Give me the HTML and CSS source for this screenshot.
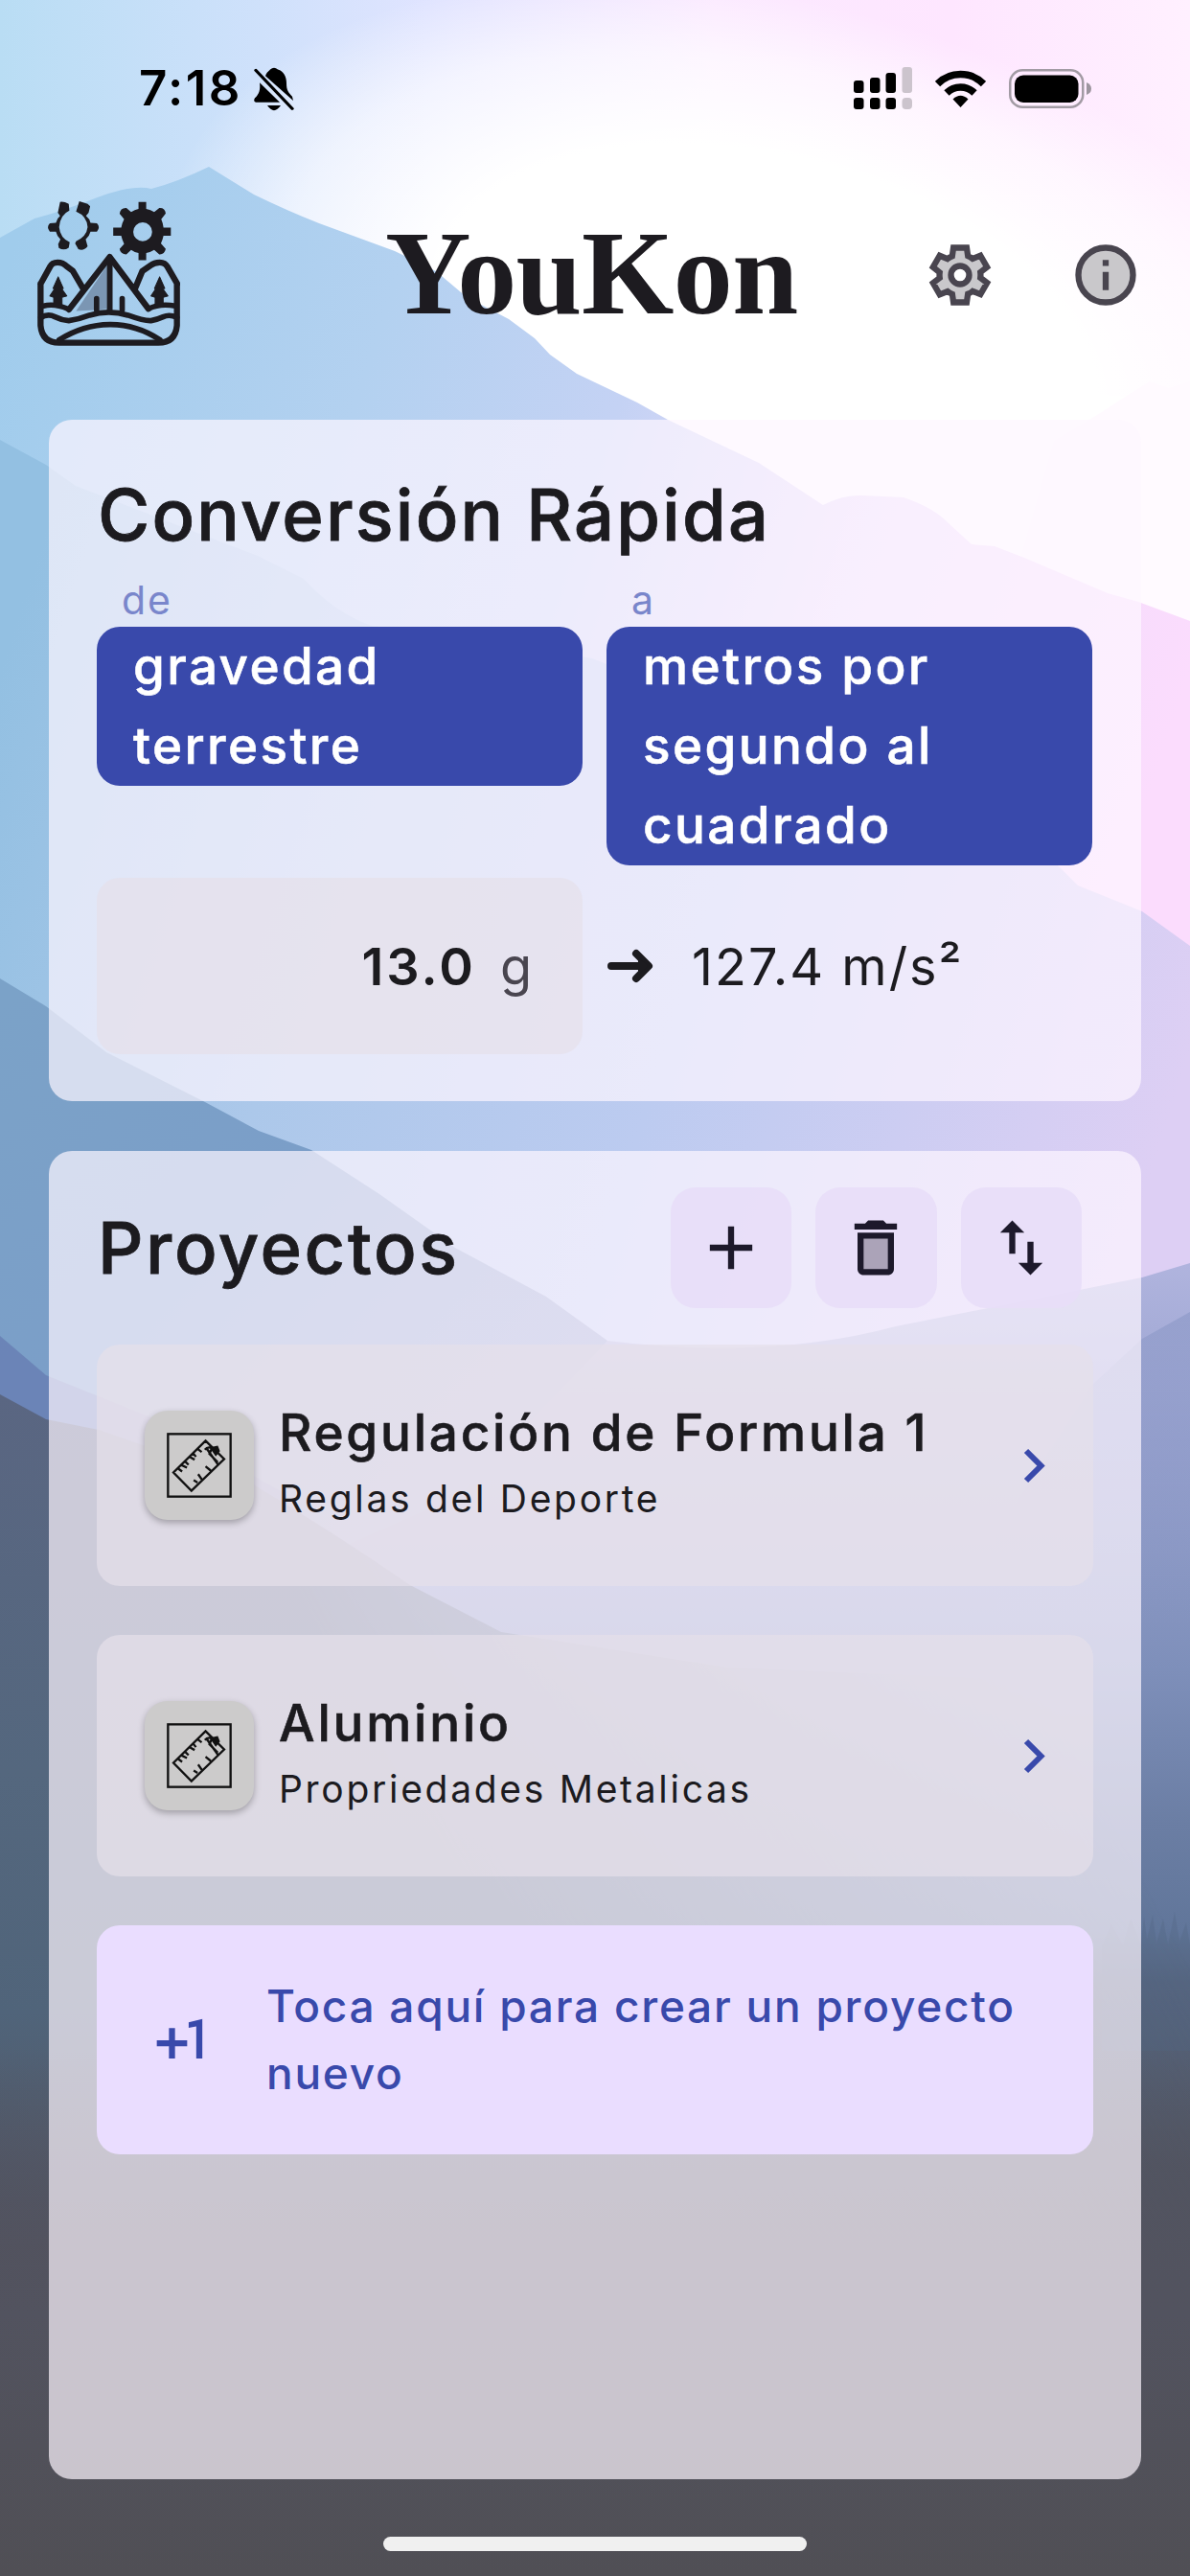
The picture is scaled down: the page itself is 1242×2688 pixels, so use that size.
FILE: index.html
```html
<!DOCTYPE html>
<html lang="es">
<head>
<meta charset="utf-8">
<title>YouKon</title>
<link rel="stylesheet" href="styles.css">
</head>
<body>
<svg class="backdrop" viewBox="0 0 1242 2688" preserveAspectRatio="none" aria-hidden="true">
  <defs>
    <linearGradient id="sky" x1="0" y1="0" x2="1" y2="0"><stop offset="0" stop-color="#b9ddf4"/><stop offset=".22" stop-color="#cfe1fb"/><stop offset=".36" stop-color="#e0e4ff"/><stop offset=".6" stop-color="#fbe9ff"/><stop offset=".8" stop-color="#fee6ff"/><stop offset="1" stop-color="#fff0ff"/></linearGradient>
    <radialGradient id="glow" gradientUnits="userSpaceOnUse" cx="0" cy="0" r="1" gradientTransform="translate(800 360) rotate(14) scale(640 360)"><stop offset="0" stop-color="#fff"/><stop offset=".55" stop-color="#fff"/><stop offset=".8" stop-color="#fff" stop-opacity=".6"/><stop offset="1" stop-color="#fff" stop-opacity="0"/></radialGradient>
    <linearGradient id="m1" gradientUnits="userSpaceOnUse" x1="0" y1="300" x2="1242" y2="700"><stop offset="0" stop-color="#a0ccec"/><stop offset=".3" stop-color="#b3d1f0"/><stop offset=".5" stop-color="#c4d2f4"/><stop offset=".72" stop-color="#ecdcfa"/><stop offset="1" stop-color="#fbdcfd"/></linearGradient>
    <linearGradient id="m2" gradientUnits="userSpaceOnUse" x1="0" y1="700" x2="1242" y2="1100"><stop offset="0" stop-color="#93c0e2"/><stop offset=".3" stop-color="#acc8ea"/><stop offset=".6" stop-color="#bccbf0"/><stop offset="1" stop-color="#ddcff4"/></linearGradient>
    <linearGradient id="m3" gradientUnits="userSpaceOnUse" x1="0" y1="1050" x2="560" y2="1560"><stop offset="0" stop-color="#7ba2c8"/><stop offset=".45" stop-color="#7b9ec8"/><stop offset="1" stop-color="#94a0cc"/></linearGradient>
    <linearGradient id="m3r" gradientUnits="userSpaceOnUse" x1="0" y1="1318" x2="0" y2="2260"><stop offset="0" stop-color="#b0b4de"/><stop offset=".2" stop-color="#97a1ce"/><stop offset=".45" stop-color="#7e8fba"/><stop offset=".62" stop-color="#6b7ea4"/><stop offset=".74" stop-color="#61769a"/><stop offset=".8" stop-color="#56647e"/><stop offset="1" stop-color="#525662"/></linearGradient>
    <linearGradient id="veil" x1="0" y1="0" x2="0" y2="1"><stop offset="0" stop-color="#8a97c6" stop-opacity=".6"/><stop offset="1" stop-color="#8a97c6" stop-opacity="0"/></linearGradient>
    <linearGradient id="deep" gradientUnits="userSpaceOnUse" x1="0" y1="1450" x2="0" y2="2450"><stop offset="0" stop-color="#5a6682"/><stop offset=".4" stop-color="#54677e"/><stop offset=".65" stop-color="#50647a"/><stop offset=".9" stop-color="#52525e"/><stop offset="1" stop-color="#505058"/></linearGradient>
    <linearGradient id="floor" x1="0" y1="0" x2="0" y2="1"><stop offset="0" stop-color="#52525e" stop-opacity="0"/><stop offset=".5" stop-color="#52535f"/><stop offset="1" stop-color="#504f55"/></linearGradient>
    <linearGradient id="thin" gradientUnits="userSpaceOnUse" x1="440" y1="1900" x2="1000" y2="1600"><stop offset="0" stop-color="#fff"/><stop offset="1" stop-color="#000"/></linearGradient>
    <mask id="thinRight" maskUnits="userSpaceOnUse" x="0" y="1400" width="1242" height="1288"><rect y="1400" width="1242" height="1288" fill="url(#thin)"/></mask>
  </defs>
  <rect width="1242" height="2688" fill="url(#sky)"/>
  <rect width="1242" height="760" fill="url(#glow)"/>
  <path fill="#fff" d="M560 360L1242 420V760H700z"/>
  <path fill="#fffaff" d="M1242 398L1220 405 1200 398 1165 420 1150 430 1100 460 1060 600 1242 700z"/>
  <path fill="url(#m1)" d="M0 248L36 228Q60 222 99 207T158 197Q185 190 218 174L265 203Q300 220 333 233L412 262 455 283 487 310 531 333 558 353 574 370 602 390 665 420 697 438 792 483 859 527Q880 516 899 517L943 519Q975 530 990 546L1014 568 1038 570 1069 582 1156 619 1188 628 1242 648V1200H0z"/>
  <path fill="url(#m2)" d="M0 459L48 485 79 507 206 556 269 580 317 604Q350 640 388 653L500 668 618 687 900 800 1101 900 1125 924 1192 951 1242 987V1500H0z"/>
  <path fill="url(#m3r)" d="M0 1650L634 1399Q800 1420 935 1384L1192 1333 1242 1318V2688H0z"/>
  <path fill="url(#veil)" d="M1040 1600L1140 1445 1192 1397 1242 1369V1700H1040z"/>
  <path fill="url(#m3)" d="M0 1021L48 1050 111 1098 214 1150 270 1180 325 1200 396 1246 475 1302 570 1353 634 1399 480 1560 300 1640H0z"/>
  <path fill="#6377ae" opacity=".65" d="M0 1394L48 1435 160 1480 300 1560V1600H0z"/>
  <path fill="#536783" d="M1150 2030L1160 2008 1172 2030 1180 2002 1191 2030 1194 2000 1197 2024 1203 1998 1207 2028 1214 2002 1219 2030 1226 1995 1231 2026 1238 2006 1242 2030V2140H1150z" opacity=".35"/>
  <path fill="url(#deep)" mask="url(#thinRight)" d="M0 1455L48 1481 103 1492 261 1547Q350 1600 428 1654L523 1703 760 1740 1242 1760V2688H0z"/>
  <rect y="2140" width="1242" height="548" fill="url(#floor)"/>
</svg>

<div class="screen">
  <div class="status">
    <div class="status-left">
      <span class="clock">7:18</span>
      <svg class="bell" viewBox="0 0 42 54" preserveAspectRatio="none"><path d="M12 11C14 5 16 5 17 3Q21-1 25 3C31 5 34 12 34 20 34 29 36 31 40 36L41 41z"/><path d="M6 19L27 43H2Q-1 42 1 38C5 33 7 29 6 19zM14 47H28Q21 59 14 47z"/><path d="M2 4L40 51" stroke="#000" stroke-width="3.4" stroke-linecap="round"/></svg>
    </div>
    <div class="status-right">
      <svg class="signal" viewBox="0 0 61 44"><g><rect y="14" width="10.500" height="13" rx="3"/><rect x="17" y="11" width="10.500" height="16" rx="3"/><rect x="33.500" y="6" width="10.500" height="21" rx="3"/><rect y="32" width="10.500" height="12" rx="3"/><rect x="17" y="32" width="10.500" height="12" rx="3"/><rect x="33.500" y="32" width="10.500" height="12" rx="3"/></g><g fill="#ccc4cd"><rect x="50.500" width="10.500" height="27" rx="3"/><rect x="50.500" y="32" width="10.500" height="12" rx="4"/></g></svg>
      <svg class="wifi" viewBox="0 0 53 39"><path d="M2.500 14.500A34 34 0 0 1 50.500 14.500" fill="none" stroke="#000" stroke-width="7.500"/><path d="M12 24A20.500 20.500 0 0 1 41 24" fill="none" stroke="#000" stroke-width="7.500"/><path d="M26.500 39L18.500 30.500Q26.500 23 34.500 30.500z"/></svg>
      <svg class="battery" viewBox="0 0 87 41"><rect x="1.250" y="1.250" width="76" height="38.500" rx="13" fill="none" stroke="#a29ba4" stroke-width="2.500"/><rect x="6" y="6.500" width="66.500" height="28.500" rx="9"/><path d="M81 14Q86 16 86 20.500T81 27z" fill="#9d959f"/></svg>
    </div>
  </div>

  <header class="topbar">
    <svg class="logo" viewBox="57 62 446 452" fill="none" stroke="#1d1b20" stroke-width="19" stroke-linejoin="round" stroke-linecap="round">
      <path d="M273 265L178 405 240 402 273 398z" fill="#7b96b3" stroke="none"/>
      <path d="M67 320L97 266Q103 253 120 253T150 266L168 280 199 333M494 320L463 266Q456 253 439 253T410 263L385 280 363 333M67 320V450Q72 504 125 504H435Q488 504 493 450V320M156 400L283 236 404 398"/>
      <path d="M283 240V400" stroke-width="18"/><path d="M242 366V402M322 366V402" stroke-width="17"/>
      <path d="M76 389Q110 380 152 398M404 398Q440 380 488 389" stroke-width="17"/>
      <path d="M68 425Q90 412 112 423T155 435Q190 430 220 418 280 400 340 418 390 436 412 435 430 432 450 423T493 425" stroke-width="17"/>
      <path d="M125 495Q200 448 283 447T440 495" stroke-width="17"/>
      <path d="M122 298L138 334 134 337 149 358 134 362V384H108V362L96 358 110 337 106 334zM439 298L455 334 450 337 465 358 450 362V384H425V362L412 358 426 337 423 334z" fill="#1d1b20" stroke-width="3"/>
      <path fill="#1d1b20" stroke="none" fill-rule="evenodd" d="M373 64H397V86Q411 89 422 96L438 83Q456 82 458 100L444 118Q449 129 451 144H474V170H451Q448 184 443 194L458 211Q454 229 438 228L422 214Q411 221 397 224V246H373V224Q359 221 350 214L335 228Q316 227 314 211L328 195Q322 184 319 170H294V144H319Q322 129 328 118L314 101Q316 82 335 83L350 96Q361 89 373 86zM386 128A29 29 0 1 0 386 187 29 29 0 1 0 386 128z"/>
      <path fill="#1d1b20" stroke="none" d="M128 64Q140 62 155 70L157 91Q128 104 125 143 128 177 158 190L155 207Q140 218 124 208L122 196 129 181Q118 171 115 157L96 157Q84 143 96 131L115 129Q119 115 128 108L121 98zM188 62L214 70 222 78 217 98 209 108Q220 117 223 129L243 131Q255 143 243 157L223 157Q220 170 208 181L214 203Q201 219 185 212L175 194 178 187Q211 172 214 143 212 108 178 94z"/>
    </svg>
    <h1 class="brand">YouKon</h1>
    <svg class="gear" viewBox="0 0 24 24"><path transform="translate(12 12) scale(.9) translate(-12 -12)" fill="#c9c8cb" stroke="#49454f" stroke-width="2.200" d="M19.440 12.990c.040-.330.080-.670.080-1.010 0-.340-.030-.660-.070-.990l2.440-1.900-2.430-4.220-2.870 1.160c-.520-.4-1.090-.740-1.710-1L14.440 2H9.570l-.440 3.070c-.620.260-1.190.6-1.710 1l-2.880-1.170-2.440 4.220 2.440 1.920c-.040.330-.070.650-.070.990 0 .340.030.680.080 1.010l-2.440 1.890 2.430 4.200 2.880-1.150c.530.410 1.100.750 1.730 1.010L9.580 22h4.850l.440-3.070c.620-.260 1.200-.6 1.730-1.010l2.880 1.150 2.430-4.200z"/><circle cx="12" cy="12" r="3" fill="#fff" stroke="#49454f" stroke-width="2"/></svg>
    <svg class="info" viewBox="0 0 24 24"><circle cx="12" cy="12" r="9" fill="#c9c8cb" stroke="#49454f" stroke-width="2"/><path fill="#49454f" d="M11 7h2v2h-2zM11 11h2v6h-2z"/></svg>
  </header>

  <section class="panel quick">
    <h2 class="heading">Conversión Rápida</h2>
    <div class="units">
      <div class="unit"><span class="unit-label">de</span><button class="unit-pick">gravedad<br>terrestre</button></div>
      <div class="unit"><span class="unit-label">a</span><button class="unit-pick">metros por<br>segundo al<br>cuadrado</button></div>
    </div>
    <div class="result">
      <div class="entry"><span class="entry-value">13.0</span><span class="entry-unit">g</span></div>
      <div class="output">
        <svg class="arrow" viewBox="0 0 48 36"><path d="M4 18H42M30 5L43 18 30 31" fill="none" stroke="#1c1b1f" stroke-width="8" stroke-linecap="round" stroke-linejoin="round"/><path d="M32 9L43 18 32 27z" fill="#1c1b1f"/></svg>
        <span class="output-text">127.4 m/s²</span>
      </div>
    </div>
  </section>

  <section class="panel projects">
    <div class="projects-head">
      <h2 class="heading">Proyectos</h2>
      <div class="actions">
        <button class="action"><svg viewBox="0 0 24 24"><path d="M19 13h-6v6h-2v-6H5v-2h6V5h2v6h6z"/></svg></button>
        <button class="action"><svg viewBox="0 0 24 24"><path d="M7 8h10v12H7z" fill="#aba3b8"/><path d="M15.500 4l-1-1h-5l-1 1H5v2h14V4zM6 19c0 1.100.9 2 2 2h8c1.100 0 2-.9 2-2V7H6zM8 9h8v10H8z" fill-rule="evenodd"/></svg></button>
        <button class="action"><svg viewBox="0 0 24 24"><path d="M16 17.010V10h-2v7.010h-3L15 21l4-3.990zM9 3L5 6.990h3V14h2V6.990h3z"/></svg></button>
      </div>
    </div>
    <article class="project">
      <div class="thumb"><svg viewBox="105 136 203 203" fill="none" stroke="#111" stroke-width="7"><rect x="109" y="140" width="195" height="195"/><path d="M226 161L284 218 182 317 126 260zM141 248L153 257M152 237L168 245M163 226L173 236M178 212L192 220M189 202L196 211M203 188L214 196M189 284L201 291M203 265L214 281M226 241L242 254M224 189Q232 178 246 184L238 202 264 228M230 186L264 234"/><path d="M244 184L262 180 267 193 258 204z" fill="#111"/></svg></div>
      <div class="project-text"><h3 class="project-name">Regulación de Formula 1</h3><p class="project-note">Reglas del Deporte</p></div>
      <svg class="chevron" viewBox="0 0 24 37"><path d="M3 3L18.500 18.500 3 34" fill="none" stroke="#3949ab" stroke-width="6"/></svg>
    </article>
    <article class="project">
      <div class="thumb"><svg viewBox="105 136 203 203" fill="none" stroke="#111" stroke-width="7"><rect x="109" y="140" width="195" height="195"/><path d="M226 161L284 218 182 317 126 260zM141 248L153 257M152 237L168 245M163 226L173 236M178 212L192 220M189 202L196 211M203 188L214 196M189 284L201 291M203 265L214 281M226 241L242 254M224 189Q232 178 246 184L238 202 264 228M230 186L264 234"/><path d="M244 184L262 180 267 193 258 204z" fill="#111"/></svg></div>
      <div class="project-text"><h3 class="project-name">Aluminio</h3><p class="project-note">Propriedades Metalicas</p></div>
      <svg class="chevron" viewBox="0 0 24 37"><path d="M3 3L18.500 18.500 3 34" fill="none" stroke="#3949ab" stroke-width="6"/></svg>
    </article>
    <button class="create">
      <svg class="plus-one" viewBox="0 0 24 24"><path fill="#3949ab" d="M10 8H8v4H4v2h4v4h2v-4h4v-2h-4zm4.500-1.920V7.900l2.500-.5V18h2V5z"/></svg>
      <span class="create-text">Toca aquí para crear un proyecto<br>nuevo</span>
    </button>
  </section>
  <div class="home-bar"></div>
</div>
</body>
</html>
```
FILE: styles.css
```css
* { box-sizing: border-box; }

body {
  margin: 0;
  width: 1242px;
  height: 2688px;
  position: relative;
  overflow: hidden;
  font-family: Inter, "Liberation Sans", sans-serif;
  color: #1c1b1f;
}

h1, h2, h3, p { margin: 0; font-weight: inherit; }
button { border: 0; font: inherit; text-align: left; padding: 0; }
svg { display: block; flex: none; }

.backdrop {
  position: absolute;
  inset: 0;
  width: 1242px;
  height: 2688px;
  z-index: -1;
}

.screen {
  width: 1242px;
  height: 2688px;
  display: flex;
  flex-direction: column;
  align-items: center;
}

.status {
  width: 100%;
  height: 184px;
  padding: 0 102px 0 145px;
  display: flex;
  justify-content: space-between;
  align-items: center;
}
.status-left, .status-right { display: flex; align-items: center; }
.clock {
  font-size: 51px;
  font-weight: 600;
  line-height: 186px;
  letter-spacing: 2.400px;
  color: #000;
}
.bell { width: 42px; height: 46px; margin: 2px 0 0 12px; }
.signal { width: 61px; height: 44px; }
.wifi { width: 53px; height: 39px; margin-left: 24px; }
.battery { width: 87px; height: 41px; margin-left: 24px; }

.topbar {
  width: 100%;
  height: 204px;
  display: flex;
  align-items: center;
  padding: 0 50px 0 39px;
}
.logo { width: 149px; height: 151px; margin-top: -2px; }
.brand {
  width: 428px;
  margin-left: 214px;
  font: 700 124px/206px "Liberation Serif", serif;
  letter-spacing: -.6px;
  color: #1d1b20;
  white-space: nowrap;
}
.gear, .info { width: 76px; height: 76px; margin-top: 2px; }
.gear { margin-left: 134px; }
.info { margin-left: 76px; }

.panel {
  width: 1140px;
  border-radius: 24px;
  background: rgba(254, 247, 255, .7);
}

.quick {
  height: 711px;
  margin-top: 50px;
  padding: 49px 50px 0;
}
.heading {
  padding-left: 1px;
  font-size: 74px;
  font-weight: 500;
  line-height: 100px;
  letter-spacing: 2.200px;
  -webkit-text-stroke: .8px currentColor;
  white-space: nowrap;
}
.units {
  height: 312px;
  display: grid;
  grid-template-columns: 507px 507px;
  column-gap: 25px;
  align-items: start;
}
.unit { display: flex; flex-direction: column; }
.unit-label {
  height: 67px;
  padding: 6px 0 0 26px;
  font-size: 41px;
  font-weight: 400;
  line-height: 66px;
  letter-spacing: 2px;
  color: #7986cb;
}
.unit-pick {
  background: #3949ab;
  color: #fff;
  border-radius: 24px;
  padding: 0 38px;
  font-size: 53px;
  font-weight: 500;
  line-height: 83px;
  letter-spacing: 2.400px;
  -webkit-text-stroke: .6px currentColor;
  white-space: nowrap;
}
.result {
  margin-top: 17px;
  display: grid;
  grid-template-columns: 507px 507px;
  column-gap: 25px;
}
.entry {
  height: 184px;
  border-radius: 24px;
  background: rgba(230, 224, 233, .7);
  display: flex;
  justify-content: flex-end;
  align-items: center;
  padding-right: 53px;
  font-size: 54px;
}
.entry-value { font-weight: 600; letter-spacing: 3px; }
.entry-unit { margin-left: 25px; color: #49454f; }
.output { display: flex; align-items: center; font-size: 54px; }
.arrow { width: 48px; height: 36px; margin-left: 1px; }
.output-text { margin-left: 40px; letter-spacing: 2px; white-space: nowrap; }

.projects {
  height: 1386px;
  margin-top: 52px;
  padding: 38px 50px 0;
}
.projects-head {
  display: flex;
  justify-content: space-between;
  align-items: center;
  height: 126px;
  padding-right: 12px;
  margin-bottom: 38px;
}
.projects-head .heading { letter-spacing: 2.600px; }
.actions { display: flex; gap: 25px; }
.action {
  width: 126.500px;
  height: 126px;
  border-radius: 26px;
  background: rgba(232, 222, 248, .9);
  display: flex;
  align-items: center;
  justify-content: center;
}
.action svg { width: 76px; height: 76px; fill: #1d192b; }

.project {
  height: 252px;
  margin-bottom: 51px;
  padding: 0 49px 0 50px;
  border-radius: 24px;
  background: rgba(230, 224, 233, .7);
  display: flex;
  align-items: center;
}
.thumb {
  width: 114px;
  height: 114px;
  border-radius: 24px;
  background: #cccbcb;
  box-shadow: 0 3px 7px rgba(0, 0, 0, .28);
  display: flex;
  align-items: center;
  justify-content: center;
}
.thumb svg { width: 68px; height: 68px; }
.project-text { margin: -7px 0 0 26px; flex: 1; white-space: nowrap; }
.project-name {
  font-size: 53px;
  font-weight: 500;
  line-height: 76px;
  letter-spacing: 2.800px;
  -webkit-text-stroke: .6px currentColor;
}
.project-note { font-size: 39px; font-weight: 400; line-height: 62px; letter-spacing: 2.700px; }
.chevron { width: 24px; height: 37px; }

.create {
  width: 1040px;
  height: 239px;
  border-radius: 24px;
  background: #eaddff;
  color: #3949ab;
  display: flex;
  align-items: center;
  padding-left: 50px;
}
.plus-one { width: 76px; height: 76px; }
.create-text {
  margin-left: 51px;
  font-size: 46px;
  font-weight: 500;
  line-height: 69.500px;
  letter-spacing: 1.750px;
  white-space: nowrap;
}

.home-bar {
  width: 442px;
  height: 15px;
  margin-top: 60px;
  border-radius: 8px;
  background: #f0f0f0;
}
```
